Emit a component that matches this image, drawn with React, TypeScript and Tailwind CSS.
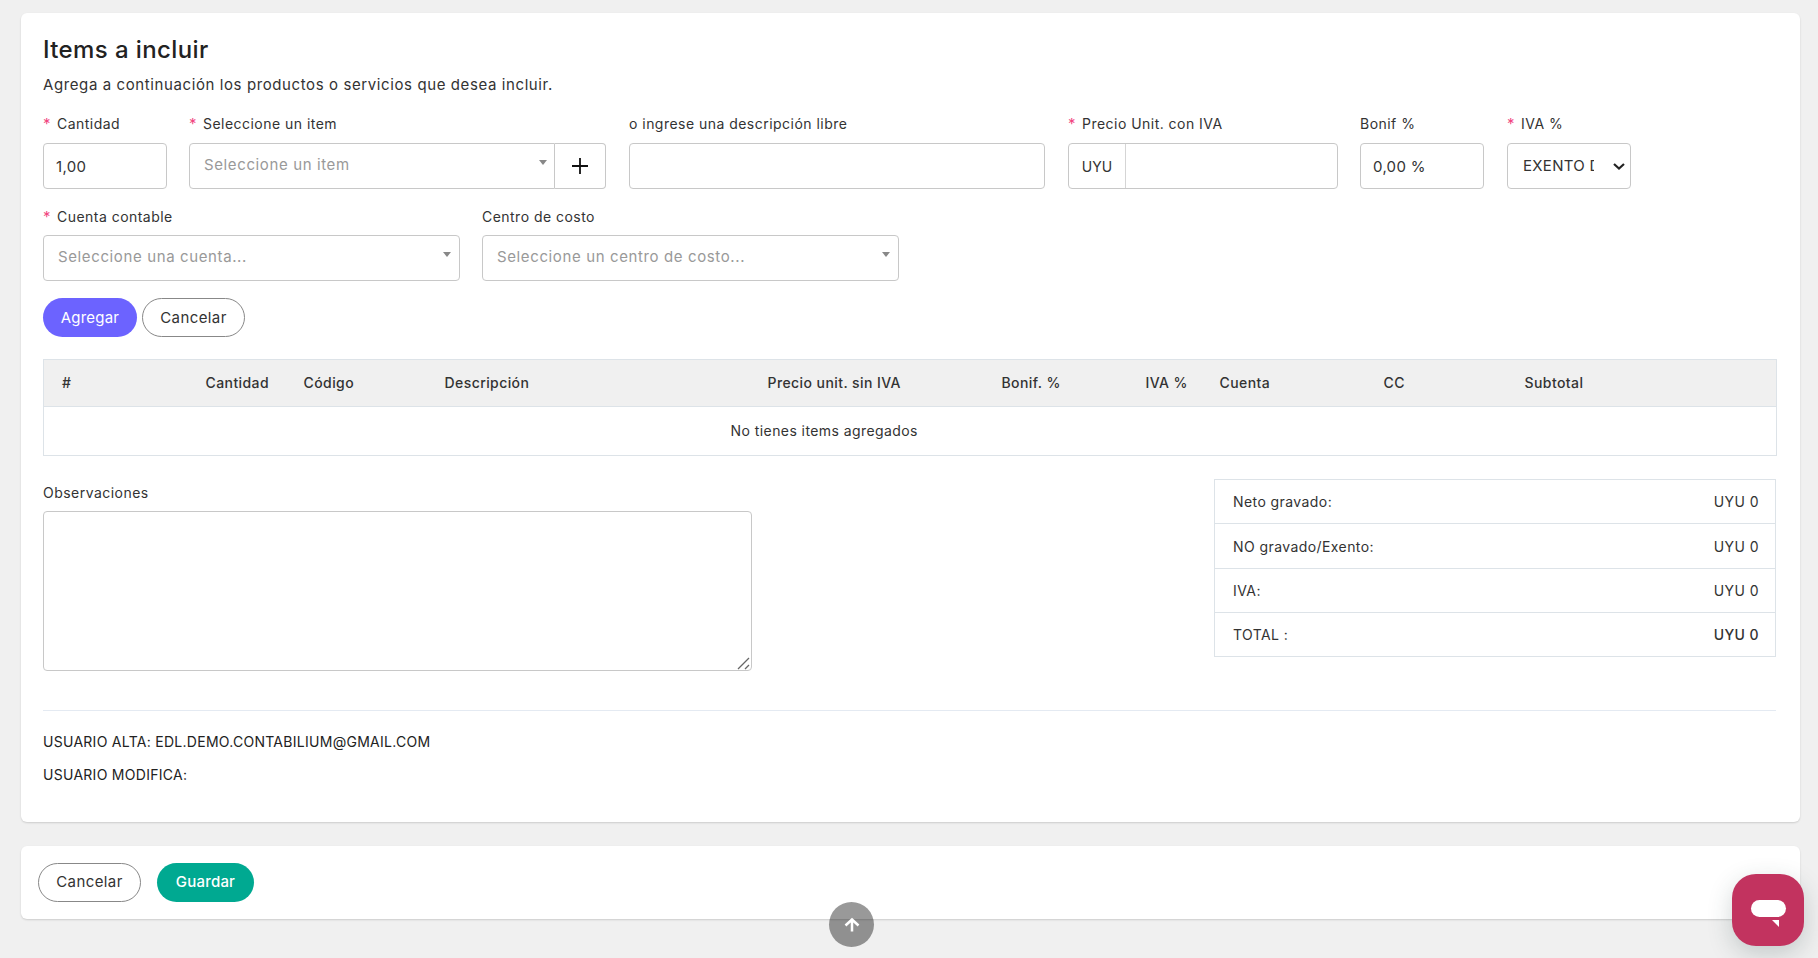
import React from 'react';

const font = { fontFamily: '"Inter", "Noto Sans", sans-serif' };

const Required = () => <span className="text-[#f1457f] text-[15px] mr-[6px]">*</span>;

const Label = ({ text, required }: { text: string; required?: boolean }) => (
  <label className="block h-5 leading-5 text-[14px] tracking-[0.47px] text-[#333]">
    {required && <Required />}
    {text}
  </label>
);

const SelectBox = ({ placeholder, className, caret }: { placeholder: string; className: string; caret: string }) => (
  <div className={`relative h-[46px] flex items-center bg-white border border-[#c8c8c8] rounded pl-[14px] pb-[2px] text-[15px] tracking-[0.62px] text-[#999] ${className}`}>
    {placeholder}
    <span className={`absolute top-[16px] border-x-[4px] border-t-[5px] border-x-transparent border-t-[#888] ${caret}`} />
  </div>
);

const inputClass = 'h-[46px] bg-white border border-[#c8c8c8] rounded px-[12px] text-[15px] tracking-[0.3px] text-[#333] outline-none';

const columns = [
  { label: '#', width: 'w-[144px]' },
  { label: 'Cantidad', width: 'w-[98px]' },
  { label: 'Código', width: 'w-[141px]' },
  { label: 'Descripción', width: 'w-[323px]' },
  { label: 'Precio unit. sin IVA', width: 'w-[234px]' },
  { label: 'Bonif. %', width: 'w-[144px]' },
  { label: 'IVA %', width: 'w-[74px]' },
  { label: 'Cuenta', width: 'w-[164px]' },
  { label: 'CC', width: 'w-[141px]' },
  { label: 'Subtotal', width: 'w-[98px]' },
  { label: '', width: 'w-[172px]' },
];

const totals = [
  { label: 'Neto gravado:', h: 'h-[43px]' },
  { label: 'NO gravado/Exento:', h: 'h-[44px]' },
  { label: 'IVA:', h: 'h-[43px]' },
  { label: 'TOTAL :', h: 'h-[43px]', bold: true },
];

const App: React.FC = () => {
  return (
    <div className="bg-[#f0f0f0] h-screen overflow-hidden pl-[21px] pr-[18px] pt-[13px] relative text-[#333]" style={font}>
      <section className="bg-white rounded-md shadow-[0_1px_2px_rgba(0,0,0,0.15)] h-[809px] pl-[22px] pr-[24px] pt-[24px]">
        <h2 className="text-[24px] leading-[26px] font-medium tracking-[0.4px] text-[#222]">Items a incluir</h2>
        <p className="mt-[12px] text-[15px] leading-5 tracking-[0.6px]">Agrega a continuación los productos o servicios que desea incluir.</p>

        {/* first row of fields */}
        <div className="mt-[19px] flex">
          <div className="w-[124px] mr-[22px]">
            <Label text="Cantidad" required />
            <input className={`${inputClass} w-full mt-[9px]`} defaultValue="1,00" />
          </div>
          <div className="w-[417px] mr-[23px]">
            <Label text="Seleccione un item" required />
            <div className="flex mt-[9px]">
              <SelectBox placeholder="Seleccione un item" className="flex-1 rounded-r-none" caret="right-[7px]" />
              <button className="h-[46px] w-[51px] border border-l-0 border-[#c8c8c8] rounded-r flex items-center justify-center">
                <svg width="16" height="16" viewBox="0 0 16 16" stroke="#111" strokeWidth="1.8"><path d="M8 0v16M0 8h16" /></svg>
              </button>
            </div>
          </div>
          <div className="w-[416px] mr-[23px]">
            <Label text="o ingrese una descripción libre" />
            <input className={`${inputClass} w-full mt-[9px]`} />
          </div>
          <div className="w-[270px] mr-[22px]">
            <Label text="Precio Unit. con IVA" required />
            <div className="flex h-[46px] mt-[9px] border border-[#c8c8c8] rounded">
              <span className="w-[57px] flex items-center justify-center border-r border-[#d5d5d5] text-[14px]">UYU</span>
              <input className="flex-1 min-w-0 outline-none" />
            </div>
          </div>
          <div className="w-[124px] mr-[23px]">
            <Label text="Bonif %" />
            <input className={`${inputClass} w-full mt-[9px]`} defaultValue="0,00 %" />
          </div>
          <div className="w-[124px]">
            <Label text="IVA %" required />
            <div className="relative mt-[9px]">
              <select className="appearance-none w-full h-[46px] bg-white border border-[#c8c8c8] rounded pl-[15px] pr-[36px] text-[15px] tracking-[0.3px] outline-none">
                <option>EXENTO DE IVA</option>
              </select>
              <svg className="absolute right-[6px] top-[20px]" width="12" height="7" viewBox="0 0 12 7" fill="none" stroke="#222" strokeWidth="2.200">
                <path d="M1 1l5 4.500L11 1" />
              </svg>
            </div>
          </div>
        </div>

        {/* second row of fields */}
        <div className="mt-[18px] flex gap-[22px]">
          <div className="w-[417px]">
            <Label text="Cuenta contable" required />
            <SelectBox placeholder="Seleccione una cuenta..." className="mt-2" caret="right-[8px]" />
          </div>
          <div className="w-[417px]">
            <Label text="Centro de costo" />
            <SelectBox placeholder="Seleccione un centro de costo..." className="mt-2" caret="right-[8px]" />
          </div>
        </div>

        <div className="mt-[17px] flex gap-[5px]">
          <button className="h-[39px] w-[94px] pt-px rounded-full bg-[#6c63ff] text-white text-[15px] tracking-[0.2px]">Agregar</button>
          <button className="h-[39px] w-[103px] pt-px rounded-full bg-white border border-[#888] text-[15px] tracking-[0.4px]">Cancelar</button>
        </div>

        <table className="mt-[22px] w-full table-fixed border border-[#dde3e8] border-collapse text-[14px] tracking-[0.42px]">
          <colgroup>
            {columns.map((c, i) => (
              <col key={i} className={c.width} />
            ))}
          </colgroup>
          <thead>
            <tr className="h-[47px] bg-[#f0f0f0] border-b border-[#dde3e8]">
              {columns.map((c, i) => (
                <th key={i} className="pl-[18px] pb-[2px] text-left font-[550] whitespace-nowrap">{c.label}</th>
              ))}
            </tr>
          </thead>
          <tbody>
            <tr className="h-[49px]">
              <td colSpan={10} className="text-center pb-[2px]">No tienes items agregados</td>
              <td />
            </tr>
          </tbody>
        </table>

        <div className="mt-[23px] flex justify-between items-start">
          <div className="pt-1">
            <Label text="Observaciones" />
            <div className="relative mt-2 w-[709px] h-[160px]">
              <textarea className="block w-full h-full resize-none border border-[#c8c8c8] rounded outline-none" />
              <svg className="absolute right-px bottom-px" width="14" height="14" viewBox="0 0 14 14" fill="none" stroke="#666" strokeWidth="1.300">
                <path d="M1 13 12 2M8 13l4-4" />
              </svg>
            </div>
          </div>
          <div className="w-[562px] border border-[#dde3e8] text-[14px] tracking-[0.42px]">
            {totals.map((t, i) => (
              <div key={t.label} className={`${t.h} box-content flex items-center justify-between pl-[18px] pr-[16px] ${i > 0 ? 'border-t border-[#dde3e8]' : ''}`}>
                <span>{t.label}</span>
                <span className={t.bold ? 'font-[550]' : ''}>UYU 0</span>
              </div>
            ))}
          </div>
        </div>

        <hr className="mt-[39px] border-[#e4eaf2]" />
        <p className="mt-[21px] h-5 leading-5 text-[14px] tracking-[0.28px] text-[#222]">USUARIO ALTA: EDL.DEMO.CONTABILIUM@GMAIL.COM</p>
        <p className="mt-[13px] h-5 leading-5 text-[14px] tracking-[0.28px] text-[#222]">USUARIO MODIFICA:</p>
      </section>

      <footer className="mt-6 h-[73px] bg-white rounded-md shadow-[0_1px_2px_rgba(0,0,0,0.15)] pl-[17px] pt-[17px] flex gap-4">
        <button className="h-[39px] w-[103px] rounded-full bg-white border border-[#888] text-[15px] tracking-[0.4px]">Cancelar</button>
        <button className="h-[39px] w-[97px] rounded-full bg-[#00a991] text-white text-[15px] font-medium tracking-[0.2px]">Guardar</button>
      </footer>

      {/* scroll to top */}
      <button className="absolute left-[829px] top-[902px] w-[45px] h-[45px] rounded-full bg-black/40 flex items-center justify-center">
        <svg width="18" height="18" viewBox="0 0 18 18" fill="none" stroke="white" strokeWidth="2.500">
          <path d="M9 15.500V3.500M2.500 9.500 9 3.500l6.500 6" />
        </svg>
      </button>

      {/* chat widget */}
      <button className="absolute left-[1732px] top-[874px] w-[72px] h-[72px] rounded-[24px] bg-[#c2335f] shadow-[0_8px_24px_rgba(40,70,70,0.22)]">
        <svg width="72" height="72" viewBox="0 0 72 72" fill="white">
          <rect x="19" y="26" width="35" height="17" rx="8.500" />
          <path d="M40 46h7v7z" />
        </svg>
      </button>
    </div>
  );
};

export default App;
